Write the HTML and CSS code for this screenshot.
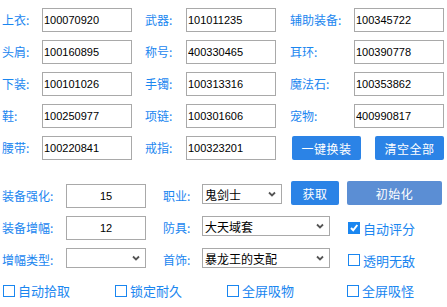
FILE: index.html
```html
<!DOCTYPE html>
<html lang="zh-CN">
<head>
  <meta charset="UTF-8" />
  <title>装备设置</title>
  <link rel="stylesheet" href="styles.css">
</head>
<body>
  <div class="panel">
    <!-- Equipment codes -->
    <div class="equip-grid">
      <span class="label">上衣:</span><input class="code" type="text" value="100070920">
      <span class="label">武器:</span><input class="code" type="text" value="101011235">
      <span class="label">辅助装备:</span><input class="code" type="text" value="100345722">

      <span class="label">头肩:</span><input class="code" type="text" value="100160895">
      <span class="label">称号:</span><input class="code" type="text" value="400330465">
      <span class="label">耳环:</span><input class="code" type="text" value="100390778">

      <span class="label">下装:</span><input class="code" type="text" value="100101026">
      <span class="label">手镯:</span><input class="code" type="text" value="100313316">
      <span class="label">魔法石:</span><input class="code" type="text" value="100353862">

      <span class="label">鞋:</span><input class="code" type="text" value="100250977">
      <span class="label">项链:</span><input class="code" type="text" value="100301606">
      <span class="label">宠物:</span><input class="code" type="text" value="400990817">

      <span class="label">腰带:</span><input class="code" type="text" value="100220841">
      <span class="label">戒指:</span><input class="code" type="text" value="100323201">
      <div class="action-pair">
        <button class="btn">一键换装</button>
        <button class="btn">清空全部</button>
      </div>
    </div>

    <!-- Character setup -->
    <div class="setup-grid">
      <span class="label">装备强化:</span>
      <div><input class="num" type="text" value="15"></div>
      <span class="label">职业:</span>
      <div class="inline">
        <div class="select short">
          <select><option>鬼剑士</option></select>
          <svg class="chev" width="8" height="6" viewBox="0 0 8 6"><path d="M1 1.5 L4 4.5 L7 1.5" fill="none" stroke="#555" stroke-width="1.8"/></svg>
        </div>
        <button class="btn small">获取</button>
      </div>
      <div><button class="btn wide">初始化</button></div>

      <span class="label">装备增幅:</span>
      <div><input class="num" type="text" value="12"></div>
      <span class="label">防具:</span>
      <div class="select long">
        <select><option>大天域套</option></select>
        <svg class="chev" width="8" height="6" viewBox="0 0 8 6"><path d="M1 1.5 L4 4.5 L7 1.5" fill="none" stroke="#555" stroke-width="1.8"/></svg>
      </div>
      <label class="check"><span class="box on"><svg width="10" height="10" viewBox="0 0 10 10"><path d="M2 5 L4.2 7.3 L8.3 2" fill="none" stroke="#fff" stroke-width="2"/></svg></span>自动评分</label>

      <span class="label">增幅类型:</span>
      <div class="select short">
        <select><option></option></select>
        <svg class="chev" width="8" height="6" viewBox="0 0 8 6"><path d="M1 1.5 L4 4.5 L7 1.5" fill="none" stroke="#555" stroke-width="1.8"/></svg>
      </div>
      <span class="label">首饰:</span>
      <div class="select long">
        <select><option>暴龙王的支配</option></select>
        <svg class="chev" width="8" height="6" viewBox="0 0 8 6"><path d="M1 1.5 L4 4.5 L7 1.5" fill="none" stroke="#555" stroke-width="1.8"/></svg>
      </div>
      <label class="check"><span class="box"></span>透明无敌</label>
    </div>

    <!-- Toggles -->
    <div class="toggles">
      <label class="check"><span class="box"></span>自动拾取</label>
      <label class="check"><span class="box"></span>锁定耐久</label>
      <label class="check"><span class="box"></span>全屏吸物</label>
      <label class="check"><span class="box"></span>全屏吸怪</label>
    </div>
  </div>
</body>
</html>
```

FILE: styles.css
```css
* {
  box-sizing: border-box;
}
body {
  margin: 0;
  background: #fff;
  font-family: "Noto Sans CJK SC", sans-serif;
  font-size: 12px;
  color: #000;
}
.panel {
  width: 447px;
  height: 307px;
  padding-top: 8px;
}
.label {
  color: #1a86f0;
  font-size: 12px;
  line-height: 14px;
  align-self: center;
  white-space: nowrap;
}
/* Top grid: equipment codes */
.equip-grid {
  display: grid;
  grid-template-columns: 40px 103px 41px 104px 64px 90px;
  grid-auto-rows: 24px;
  row-gap: 8px;
  padding-left: 2px;
}
.code {
  width: 90px;
  height: 24px;
  border: 1px solid #a9a9a9;
  padding: 0 1px;
  font-family: "Liberation Sans", sans-serif;
  font-size: 11px;
  color: #000;
  outline: none;
}
.action-pair {
  grid-column: span 2;
  display: flex;
  gap: 14px;
  padding-left: 2px;
}
.btn {
  border: none;
  border-radius: 2px;
  background: #2b83e6;
  color: #fff;
  font-family: "Noto Sans CJK SC", sans-serif;
  font-size: 12px;
  letter-spacing: 0.5px;
  height: 24px;
  width: 69px;
  padding: 0;
}
/* Setup grid */
.setup-grid {
  display: grid;
  grid-template-columns: 64px 97px 39px 145px 100px;
  grid-auto-rows: 24px;
  row-gap: 8px;
  padding-left: 2px;
  margin-top: 24px;
}
.num {
  width: 80px;
  height: 24px;
  border: 1px solid #a9a9a9;
  text-align: center;
  font-family: "Liberation Sans", sans-serif;
  font-size: 11px;
  outline: none;
}
.inline {
  display: flex;
  align-items: flex-start;
}
.btn.small {
  width: 48px;
  margin-left: 9px;
  margin-top: -3px;
}
.btn.wide {
  width: 95px;
  margin-top: -3px;
  background: #5b8ed4;
}
.select {
  position: relative;
  height: 20px;
}
.select.short {
  width: 80px;
}
.select.long {
  width: 128px;
}
.select select {
  appearance: none;
  width: 100%;
  height: 20px;
  border: 1px solid #a9a9a9;
  border-radius: 0;
  background: #fff;
  padding: 0 2px;
  font-family: "Noto Sans CJK SC", sans-serif;
  font-size: 12px;
  color: #000;
  outline: none;
}
.chev {
  position: absolute;
  right: 6px;
  top: 7px;
}
.check {
  display: flex;
  align-items: center;
  color: #1a86f0;
  font-size: 13px;
  line-height: 15px;
  white-space: nowrap;
}
.box {
  width: 12px;
  height: 12px;
  border: 1px solid #1a86f0;
  margin-right: 3px;
  display: flex;
  align-items: center;
  justify-content: center;
}
.box.on {
  background: #1a86f0;
}
.setup-grid .check {
  margin-left: 1px;
}
/* Bottom toggles */
.toggles {
  display: grid;
  grid-template-columns: 112px 112px 120px auto;
  padding-left: 3px;
  margin-top: 11px;
}
```
